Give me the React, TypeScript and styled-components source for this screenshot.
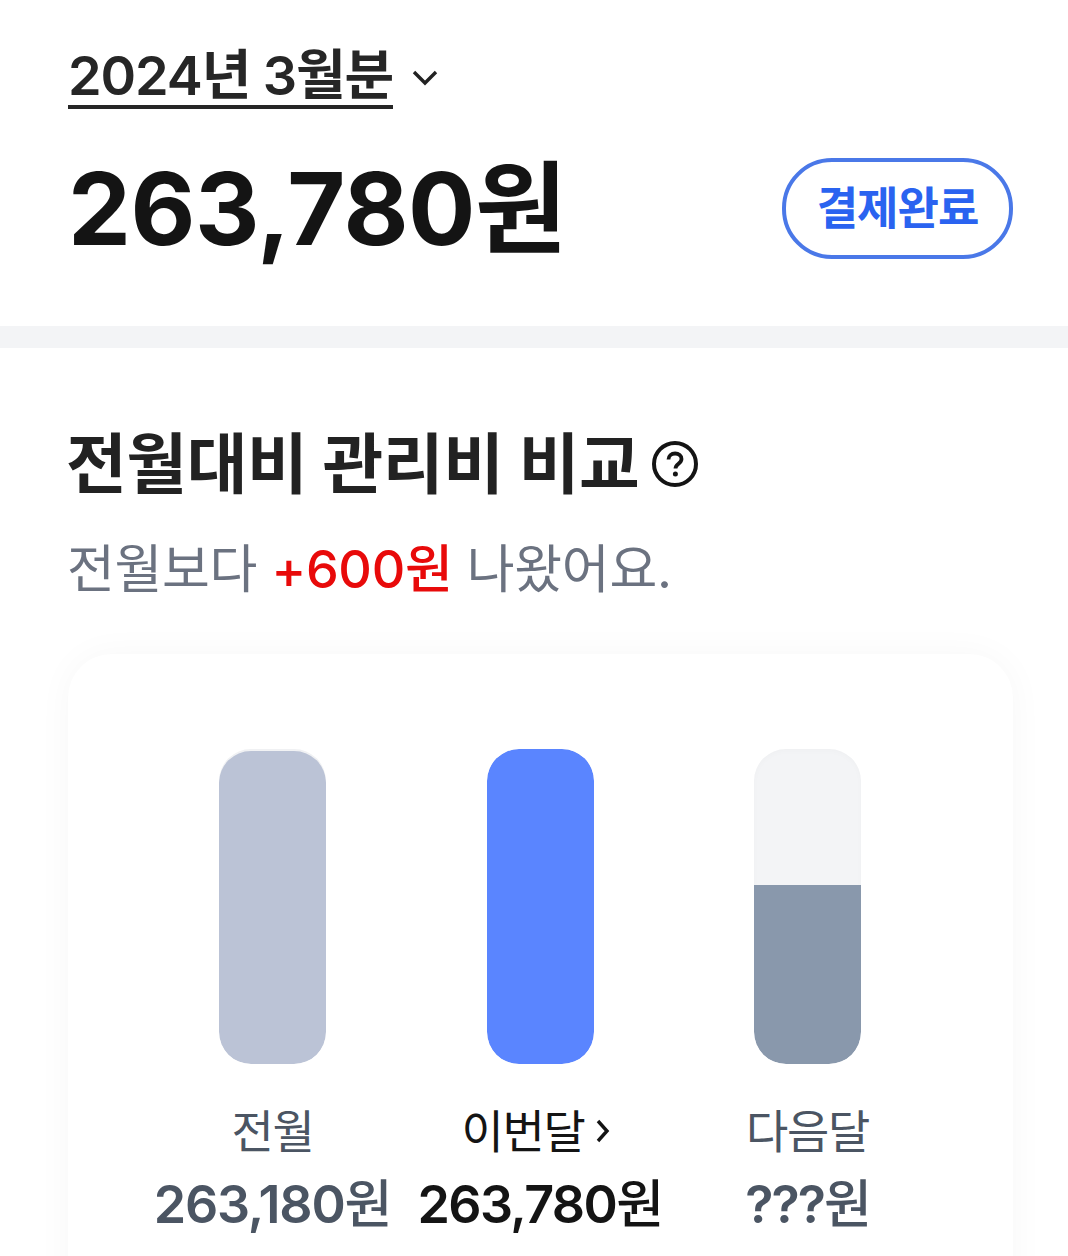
import styled, { createGlobalStyle } from 'styled-components';

const GlobalStyle = createGlobalStyle`
  html, body {
    margin: 0;
    padding: 0;
    background: #fff;
    overflow: hidden;
  }
  body {
    font-family: Inter, "Noto Sans CJK KR", sans-serif;
  }
`;

const Page = styled.div`
  width: 1068px;
  height: 1256px;
  overflow: hidden;
  background: #fff;
`;

const Summary = styled.header`
  height: 326px;
  box-sizing: border-box;
  padding: 46px 55px 0 68px;
`;

const PeriodRow = styled.div`
  display: flex;
  align-items: center;
  gap: 18px;
  height: 64px;
`;

const Period = styled.span`
  font-size: 54px;
  font-weight: 600;
  line-height: 58px;
  letter-spacing: -1.1px;
  color: #262626;
  border-bottom: 4px solid #262626;
`;

const AmountRow = styled.div`
  display: flex;
  align-items: center;
  justify-content: space-between;
  margin-top: 44px;
`;

const Amount = styled.strong`
  font-size: 100px;
  font-weight: 700;
  line-height: 110px;
  letter-spacing: -0.5px;
  color: #141414;
`;

const StatusBadge = styled.span`
  display: flex;
  align-items: center;
  justify-content: center;
  width: 231px;
  height: 101px;
  box-sizing: border-box;
  margin-bottom: 2px;
  padding-bottom: 6px;
  border: 4px solid #4a78e8;
  border-radius: 50px;
  font-size: 45px;
  font-weight: 700;
  letter-spacing: -1px;
  color: #2a63f0;
`;

const Divider = styled.div`
  height: 22px;
  background: #f3f4f6;
`;

const Section = styled.section`
  padding: 76px 55px 0 68px;
`;

const TitleRow = styled.div`
  display: flex;
  align-items: center;
  gap: 13px;
  height: 80px;
`;

const Title = styled.h2`
  margin: 0 0 0 -2px;
  font-size: 66px;
  font-weight: 700;
  line-height: 80px;
  letter-spacing: -0.4px;
  color: #222;
`;

const Note = styled.p`
  margin: 32px 0 0 -1px;
  font-size: 52px;
  font-weight: 400;
  line-height: 68px;
  letter-spacing: -0.3px;
  color: #6b7280;
`;

const Delta = styled.span`
  font-weight: 500;
  color: #e80a0a;
`;

const Card = styled.div`
  display: flex;
  justify-content: center;
  margin-top: 50px;
  height: 700px;
  box-sizing: border-box;
  padding: 95px 1px 0 0;
  border-radius: 44px;
  background: #fff;
  box-shadow: 0 0 36px rgba(0, 0, 0, 0.035);
`;

const Column = styled.div`
  display: flex;
  flex-direction: column;
  align-items: center;
  width: 267.5px;
`;

const Track = styled.div`
  position: relative;
  width: 107px;
  height: 315px;
  border-radius: 32px;
  overflow: hidden;
  background: #f3f4f6;
  box-shadow: inset 0 2px 6px rgba(0, 0, 0, 0.02);
`;

const Fill = styled.div<{ $color: string; $height: number }>`
  position: absolute;
  left: 0;
  right: 0;
  bottom: 0;
  height: ${(p) => p.$height}px;
  background: ${(p) => p.$color};
  border-radius: ${(p) => (p.$height > 300 ? '32px' : '0 0 32px 32px')};
`;

const Label = styled.div<{ $active?: boolean }>`
  display: flex;
  align-items: center;
  gap: 12px;
  margin-top: 37px;
  margin-right: ${(p) => (p.$active ? '8px' : '0')};
  font-size: 46px;
  font-weight: 400;
  line-height: 60px;
  letter-spacing: -1.4px;
  color: ${(p) => (p.$active ? '#141414' : '#4b5563')};
`;

const Value = styled.div<{ $active?: boolean; $spacing: number }>`
  margin-top: 14px;
  font-size: 52px;
  font-weight: 600;
  line-height: 60px;
  letter-spacing: ${(p) => p.$spacing}px;
  white-space: nowrap;
  color: ${(p) => (p.$active ? '#141414' : '#4b5563')};
`;

const Unit = styled.span`
  font-weight: 500;
`;

const bars = [
  { label: '전월', value: '263,180', color: '#bbc3d6', height: 313, spacing: -1.2 },
  { label: '이번달', value: '263,780', color: '#5a85ff', height: 315, spacing: -1.6, active: true },
  { label: '다음달', value: '???', color: '#8998ac', height: 179, spacing: -2 },
];

const App = () => {
  return (
    <Page>
      <GlobalStyle />
      <Summary>
        <PeriodRow>
          <Period>2024년 3월분</Period>
          <svg width="28" height="18" viewBox="0 0 28 18" fill="none" aria-hidden="true">
            <path d="M3 3l11 11L25 3" stroke="#222" strokeWidth="3.4" />
          </svg>
        </PeriodRow>
        <AmountRow>
          <Amount>263,780원</Amount>
          <StatusBadge>결제완료</StatusBadge>
        </AmountRow>
      </Summary>
      <Divider />
      <Section>
        <TitleRow>
          <Title>전월대비 관리비 비교</Title>
          <svg width="46" height="46" viewBox="0 0 46 46" fill="none" aria-hidden="true">
            <circle cx="23" cy="23" r="21" stroke="#141414" strokeWidth="4" />
            <path
              d="M16.5 18.5c0-3.8 2.9-6 6.6-6 3.6 0 6.4 2.2 6.4 5.5 0 4.6-6 4.8-6 9.5"
              stroke="#141414"
              strokeWidth="3.8"
            />
            <circle cx="23.4" cy="33" r="2.5" fill="#141414" />
          </svg>
        </TitleRow>
        <Note>
          전월보다 <Delta>+600원</Delta> 나왔어요.
        </Note>
        <Card>
          {bars.map((bar) => (
            <Column key={bar.label}>
              <Track>
                <Fill $color={bar.color} $height={bar.height} />
              </Track>
              <Label $active={bar.active}>
                {bar.label}
                {bar.active && (
                  <svg width="14" height="24" viewBox="0 0 14 24" fill="none" aria-hidden="true">
                    <path d="M2 2l9 10-9 10" stroke="#141414" strokeWidth="3.4" />
                  </svg>
                )}
              </Label>
              <Value $active={bar.active} $spacing={bar.spacing}>
                {bar.value}
                <Unit>원</Unit>
              </Value>
            </Column>
          ))}
        </Card>
      </Section>
    </Page>
  );
};

export default App;
